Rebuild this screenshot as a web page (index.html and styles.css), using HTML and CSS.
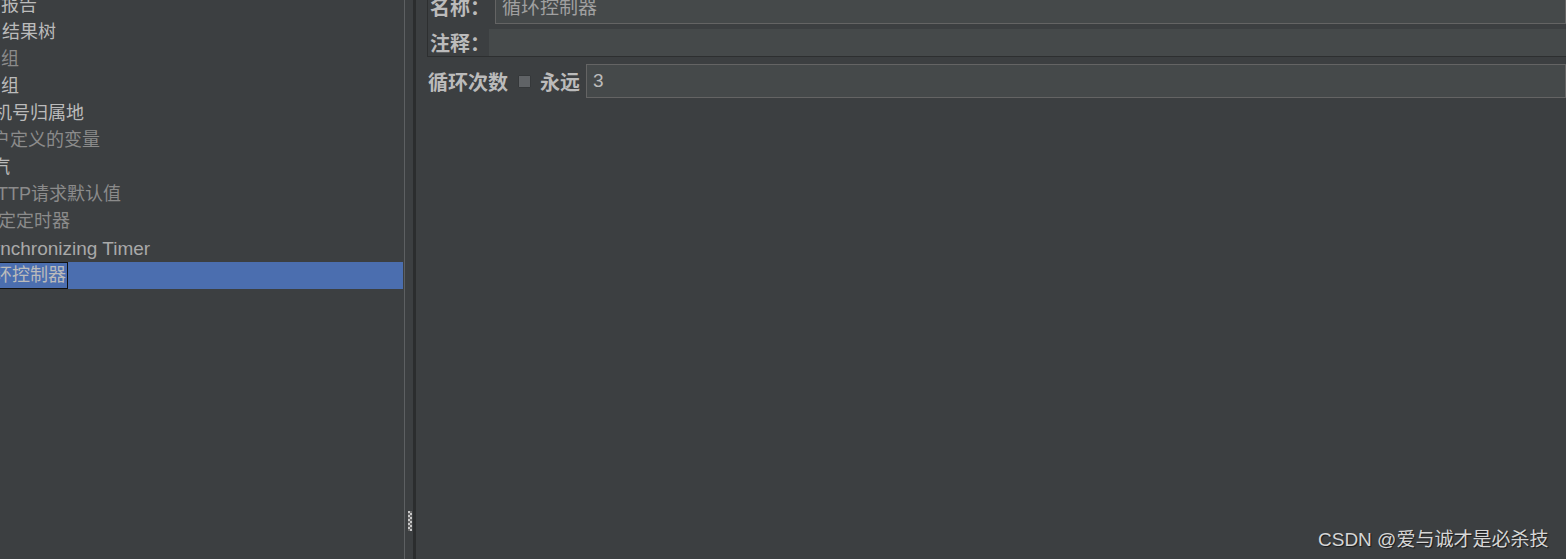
FILE: index.html
```html
<!DOCTYPE html>
<html lang="zh-CN">
<head>
<meta charset="utf-8">
<title>循环控制器</title>
<link rel="stylesheet" href="styles.css">
</head>
<body>
<div class="app">
  <div class="tree">
    <div class="row light s-a">报告</div>
    <div class="row light s-b">结果树</div>
    <div class="row dim s-c">组</div>
    <div class="row light s-c">组</div>
    <div class="row light s-d">手机号归属地</div>
    <div class="row dim s-e">用户定义的变量</div>
    <div class="row light s-f">汽</div>
    <div class="row dim s-g">HTTP请求默认值</div>
    <div class="row dim s-h">固定定时器</div>
    <div class="row mid latin s-i">Synchronizing Timer</div>
    <div class="row light selected"><span class="sel-box s-j">循环控制器</span></div>
  </div>
  <div class="splitter">
    <svg class="grip" width="6" height="22" viewBox="0 0 6 22">
      <g fill="#c8c8c8">
        <rect x="1" y="0" width="2" height="2"/><rect x="3" y="2" width="2" height="2"/>
        <rect x="1" y="4" width="2" height="2"/><rect x="3" y="6" width="2" height="2"/>
        <rect x="1" y="8" width="2" height="2"/><rect x="3" y="10" width="2" height="2"/>
        <rect x="1" y="12" width="2" height="2"/><rect x="3" y="14" width="2" height="2"/>
        <rect x="1" y="16" width="2" height="2"/><rect x="3" y="18" width="2" height="2"/>
      </g>
      <g fill="#6a6a6a">
        <rect x="3" y="0" width="2" height="2"/><rect x="1" y="2" width="2" height="2"/>
        <rect x="3" y="4" width="2" height="2"/><rect x="1" y="6" width="2" height="2"/>
        <rect x="3" y="8" width="2" height="2"/><rect x="1" y="10" width="2" height="2"/>
        <rect x="3" y="12" width="2" height="2"/><rect x="1" y="14" width="2" height="2"/>
        <rect x="3" y="16" width="2" height="2"/><rect x="1" y="18" width="2" height="2"/>
      </g>
    </svg>
  </div>
  <div class="editor">
    <div class="box">
      <div class="name-row">
        <span class="label">名称：</span>
        <div class="field name-field">循环控制器</div>
      </div>
      <div class="comment-row">
        <span class="label">注释：</span>
        <div class="field comment-field"></div>
      </div>
    </div>
    <div class="loop-row">
      <span class="label">循环次数</span>
      <span class="checkbox"></span>
      <span class="label forever">永远</span>
      <div class="field loop-field">3</div>
    </div>
  </div>
</div>
<div class="watermark">CSDN @爱与诚才是必杀技</div>
</body>
</html>
```
FILE: styles.css
```css
html, body {
  margin: 0;
  padding: 0;
  height: 100%;
  overflow: hidden;
  background: #3c3f41;
}
body {
  font-family: "Liberation Sans", "Noto Sans CJK SC", sans-serif;
  color: #bbbbbb;
}
.app {
  display: flex;
  height: 559px;
}
.tree {
  width: 403px;
  flex: none;
  overflow: hidden;
  margin-top: -8px;
  font-size: 18px;
}
.row {
  height: 27px;
  line-height: 27px;
  white-space: nowrap;
}
.latin { font-size: 19px; }
.light { color: #bbbbbb; }
.dim { color: #8b8b8b; }
.mid { color: #a9a9a9; }
.s-a { margin-left: 1px; }
.s-b { margin-left: 2px; }
.s-c { margin-left: 1px; }
.s-d { margin-left: -24px; }
.s-e { margin-left: -26px; }
.s-f { margin-left: -8px; }
.s-g { margin-left: -16px; }
.s-h { margin-left: -20px; }
.s-i { margin-left: -22px; }
.s-j { margin-left: -25px; }
.selected {
  background: #4b6eaf;
}
.sel-box {
  display: inline-block;
  height: 25px;
  line-height: 25px;
  border: 1px solid #111111;
  padding-right: 1px;
}
.splitter {
  flex: none;
  width: 8px;
  margin-left: 1px;
  border-left: 1px solid #5d6062;
  border-right: 3px solid #2b2d2e;
  display: flex;
  align-items: flex-end;
  justify-content: center;
}
.grip {
  margin-bottom: 26px;
  margin-left: 1px;
}
.editor {
  flex: 1;
  padding-left: 11px;
  margin-top: -7px;
  min-width: 0;
}
.box {
  border-left: 1px solid #2d2f30;
  border-bottom: 1px solid #2d2f30;
  padding-left: 2px;
}
.label {
  font-weight: bold;
  font-size: 20px;
  color: #bbbbbb;
  white-space: nowrap;
}
.field {
  background: #45494a;
  border: 1px solid #646464;
  font-size: 19px;
  color: #bbbbbb;
  padding-left: 6px;
  box-sizing: border-box;
  white-space: nowrap;
}
.name-row {
  display: flex;
  align-items: center;
  height: 31px;
}
.name-row .label {
  width: 65px;
  margin-top: -4px;
}
.name-field {
  flex: 1;
  height: 31px;
  line-height: 27px;
  color: #a0a0a0;
}
.comment-row {
  display: flex;
  align-items: center;
  margin-top: 5px;
  height: 27px;
}
.comment-row .label { width: 59px; }
.comment-field {
  flex: 1;
  height: 27px;
  border-color: #45494a;
}
.loop-row {
  display: flex;
  align-items: center;
  margin-top: 7px;
  height: 34px;
  padding-left: 1px;
}
.checkbox {
  width: 11px;
  height: 11px;
  margin-left: 10px;
  background: #606366;
  border: 1px solid #35383a;
  border-radius: 1px;
  flex: none;
}
.forever {
  margin-left: 9px;
}
.loop-field {
  flex: 1;
  height: 34px;
  line-height: 32px;
  margin-left: 6px;
}
.watermark {
  position: absolute;
  left: 1318px;
  top: 524px;
  font-size: 19px;
  color: #d6d6d6;
  text-shadow: 1px 1px 1px rgba(0, 0, 0, 0.6);
  white-space: nowrap;
}
```
